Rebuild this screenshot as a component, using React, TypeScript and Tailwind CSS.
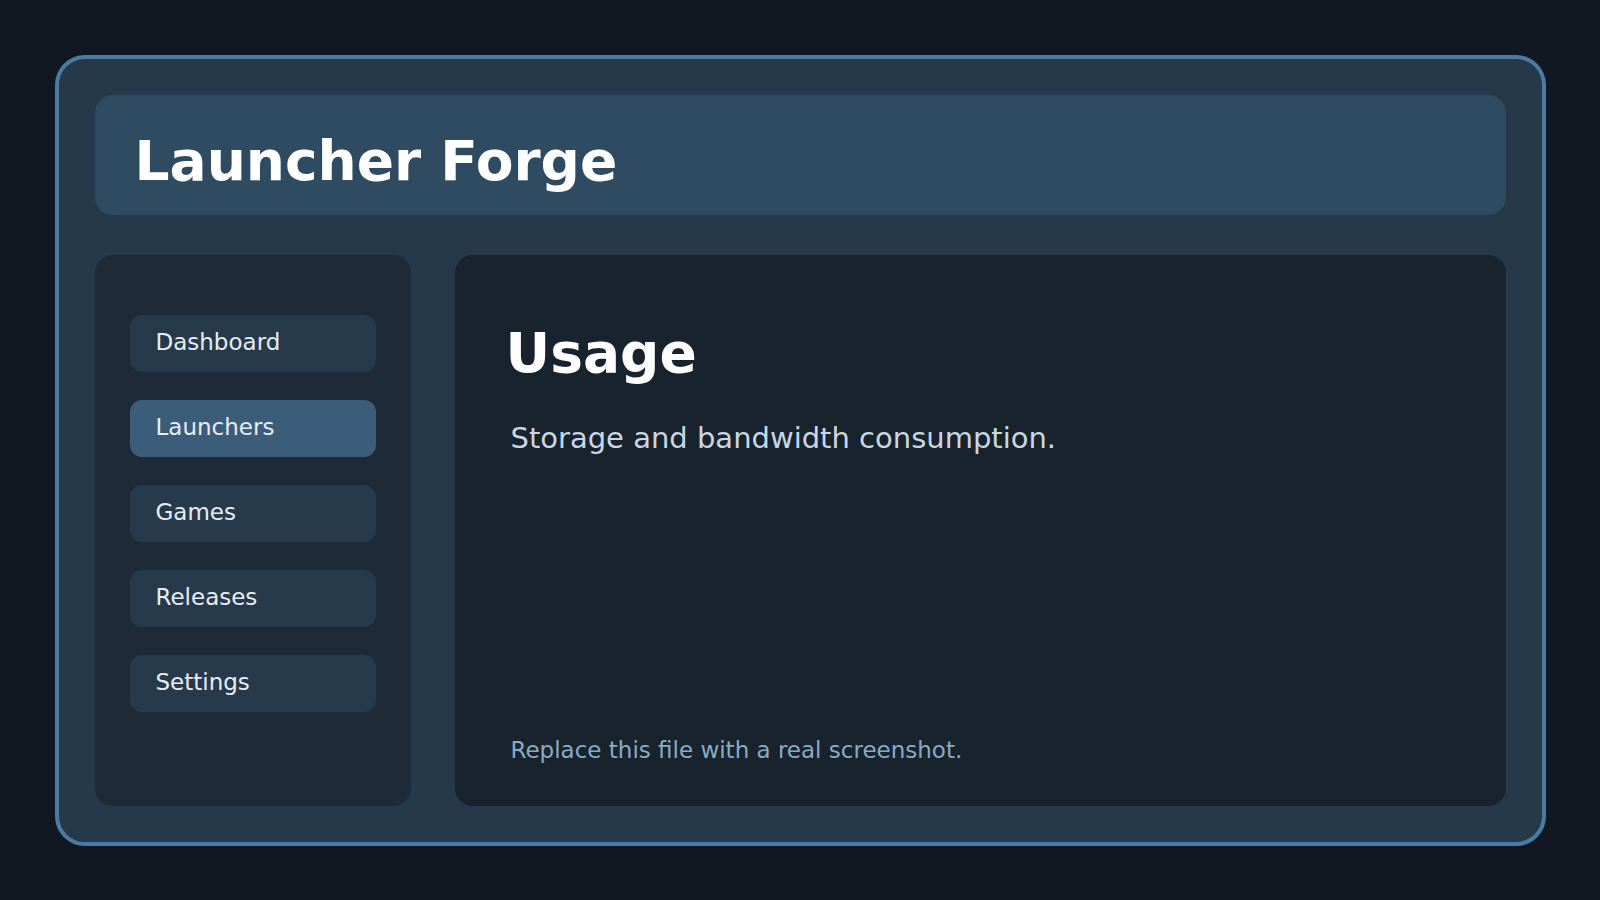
const navItems = ["Dashboard", "Launchers", "Games", "Releases", "Settings"];

export default function App() {
    const active = "Launchers";

    return (
        <div
            className="w-full h-screen bg-[#121821] flex items-center justify-center"
            style={{ fontFamily: '"DejaVu Sans", "Liberation Sans", sans-serif' }}
        >
            <div className="w-[1491px] h-[791px] bg-[#25394b] border-4 border-[#4b7ba3] rounded-[30px] p-[36px] flex flex-col gap-[40px]">
                <header className="h-[120px] shrink-0 bg-[#2f4b61] rounded-[18px] pl-[40px] pt-[34px]">
                    <h1 className="text-[55px] leading-[64px] font-bold text-white">
                        Launcher Forge
                    </h1>
                </header>

                <div className="flex-1 grid grid-cols-[316px_1fr] gap-[44px]">
                    <nav className="bg-[#1e2a37] rounded-[18px] pt-[60px] px-[35px] flex flex-col gap-[28px]">
                        {navItems.map(item => (
                            <div
                                key={item}
                                className={
                                    item === active
                                        ? "h-[57px] rounded-xl bg-[#3b5d79] pl-[26px] pb-[2px] flex items-center text-[23px] text-[#e6edf3]"
                                        : "h-[57px] rounded-xl bg-[#263a4b] pl-[26px] pb-[2px] flex items-center text-[23px] text-[#e6edf3]"
                                }
                            >
                                {item}
                            </div>
                        ))}
                    </nav>

                    <main className="bg-[#18232d] rounded-[18px] pt-[66px] pl-[51px] pb-[42px] flex flex-col">
                        <h2 className="text-[55px] leading-[64px] font-bold text-white">Usage</h2>
                        <p className="mt-[35px] ml-[5px] text-[29px] leading-[36px] text-[#cad7e2]">
                            Storage and bandwidth consumption.
                        </p>
                        <p className="mt-auto ml-[5px] text-[23px] leading-[28px] text-[#8aabc5]">
                            Replace this file with a real screenshot.
                        </p>
                    </main>
                </div>
            </div>
        </div>
    );
}
